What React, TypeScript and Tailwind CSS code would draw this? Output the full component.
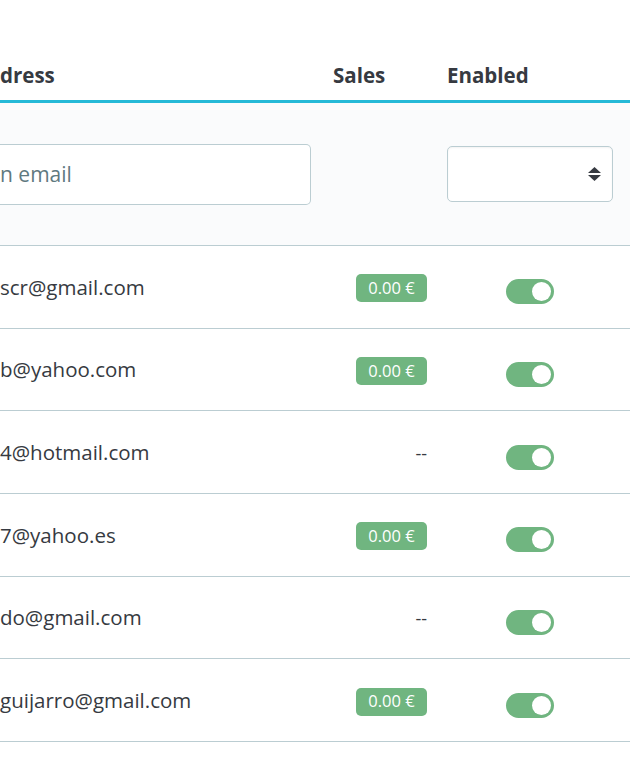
const rows = [
  { email: "scr@gmail.com", sales: "0.00 €" },
  { email: "b@yahoo.com", sales: "0.00 €" },
  { email: "4@hotmail.com", sales: null },
  { email: "7@yahoo.es", sales: "0.00 €" },
  { email: "do@gmail.com", sales: null },
  { email: "guijarro@gmail.com", sales: "0.00 €" },
];

const Toggle = () => (
  <span className="relative inline-block h-[25px] w-[48px] rounded-full bg-[#70b580]">
    <span className="absolute right-[3px] top-[3px] h-[19px] w-[19px] rounded-full bg-white" />
  </span>
);

const SortArrows = () => (
  <svg width="13" height="14" viewBox="0 0 13 14" className="fill-[#363a41]">
    <polygon points="0,6 6.5,0 13,6" />
    <polygon points="0,8 13,8 6.5,14" />
  </svg>
);

export default function App() {
  return (
    <div
      className="w-[630px] h-[762px] overflow-hidden bg-white text-[#363a41]"
      style={{ fontFamily: '"Open Sans", "Liberation Sans", sans-serif' }}
    >
      {/* header */}
      <div className="grid h-[100px] grid-cols-[318px_114px_1fr] items-end pb-[11px] text-[20.5px] font-bold leading-[27px]">
        <div>dress</div>
        <div className="pl-[15px]">Sales</div>
        <div className="pl-[15px]">Enabled</div>
      </div>
      <div className="h-[3px] bg-[#25b9d7]" />

      {/* filters */}
      <div className="grid h-[143px] grid-cols-[318px_114px_1fr] items-center border-b border-[#bbcdd2] bg-[#fafbfc]">
        <div className="pr-[7px]">
          <div className="flex h-[61px] items-center rounded-r-[5px] border border-l-0 border-[#bbcdd2] bg-white pt-[2px] text-[21px] text-[#5f7980]">
            n email
          </div>
        </div>
        <div />
        <div className="pl-[15px]">
          <div className="flex h-[56px] w-[166px] items-center justify-end rounded-[5px] border border-[#bbcdd2] bg-white pr-[11px] shadow-[inset_0_1px_2px_rgba(0,0,0,0.05)]">
            <SortArrows />
          </div>
        </div>
      </div>

      {/* rows */}
      {rows.map((r) => (
        <div
          key={r.email}
          className="grid h-[82.67px] grid-cols-[318px_114px_1fr] items-center border-b border-[#bbcdd2]"
        >
          <div className="text-[20.5px] leading-[28px]">{r.email}</div>
          <div className="flex justify-end pr-[5px] pt-[3px]">
            {r.sales ? (
              <span className="flex h-[28px] w-[71px] items-center justify-center rounded-[5px] bg-[#70b580] text-[16.5px] text-white">
                {r.sales}
              </span>
            ) : (
              <span className="text-[18px]">--</span>
            )}
          </div>
          <div className="flex justify-center pl-[15px] pr-[18px] pt-[10px]">
            <Toggle />
          </div>
        </div>
      ))}
    </div>
  );
}
